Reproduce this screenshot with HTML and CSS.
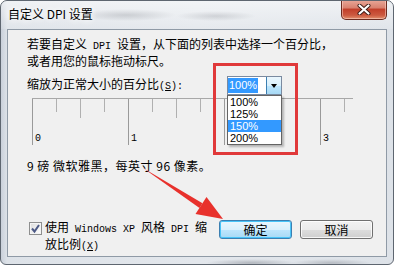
FILE: index.html
```html
<!DOCTYPE html>
<html lang="zh-CN">
<head>
<meta charset="utf-8">
<title>自定义 DPI 设置</title>
<link rel="stylesheet" href="styles.css">
</head>
<body>
<div class="window">
  <div class="titlebar">
    <div class="title">自定义 DPI 设置</div>
    <div class="close">
      <svg width="14" height="11" viewBox="0 0 14 11"><path d="M2.5 1.5 L11.5 9.5 M11.5 1.5 L2.5 9.5" stroke="#3a1a14" stroke-width="4" stroke-linecap="round"/><path d="M2.5 1.5 L11.5 9.5 M11.5 1.5 L2.5 9.5" stroke="#fff" stroke-width="2.2" stroke-linecap="round"/></svg>
    </div>
  </div>
  <div class="client">
    <p class="intro">若要自定义<span class="m"> DPI </span>设置，从下面的列表中选择一个百分比，<br>或者用您的鼠标拖动标尺。</p>
    <div class="scale-row">
      <div class="scale-label">缩放为正常大小的百分比<span class="m">(<u>S</u>):</span></div>
      <div class="combo">
        <div class="combo-field"><span class="combo-sel">100%</span></div>
        <div class="combo-btn"><span class="tri"></span></div>
        <ul class="combo-list">
          <li>100%</li>
          <li>125%</li>
          <li class="on">150%</li>
          <li>200%</li>
        </ul>
      </div>
    </div>
    <div class="ruler">
      <span class="m">0</span><span class="m">1</span><span class="m">2</span><span class="m">3</span>
    </div>
    <p class="note">9 磅 微软雅黑，每英寸 96 像素。</p>
    <div class="bottom">
      <span class="check">
        <svg width="11" height="11" viewBox="0 0 11 11"><path d="M2 5.5 L4.5 8.5 L9 2" fill="none" stroke="#4d5a86" stroke-width="2"/></svg>
      </span>
      <div class="check-label">使用<span class="m"> Windows XP </span>风格<span class="m"> DPI </span>缩<br>放比例<span class="m">(<u>X</u>)</span></div>
      <button class="btn btn-default">确定</button>
      <button class="btn">取消</button>
    </div>
  </div>
</div>
<div class="highlight-box"></div>
<svg class="arrow" width="394" height="265" viewBox="0 0 394 265">
  <polygon points="143,168 202.5,203.3 199.5,208" fill="#e8312c"/>
  <polygon points="223,219 195.5,214 206.5,197" fill="#e8312c"/>
</svg>
</body>
</html>
```
FILE: styles.css
```css
html, body {
  margin: 0;
  padding: 0;
}
body {
  width: 394px;
  height: 265px;
  position: relative;
  overflow: hidden;
  background: #fff;
  font-family: "Noto Sans CJK SC", "Noto Sans", sans-serif;
  font-size: 12px;
  color: #000;
}
.m {
  font-family: "Liberation Mono", "DejaVu Sans Mono", monospace;
  font-size: 10px;
  white-space: pre;
}
.window {
  box-sizing: border-box;
  width: 394px;
  height: 265px;
  border: 1px solid #5e6670;
  border-radius: 7px 7px 6px 6px;
  display: flex;
  flex-direction: column;
  overflow: hidden;
  background:
    radial-gradient(ellipse 50px 6px at 125px 14px, rgba(90,95,105,0.35), transparent),
    radial-gradient(ellipse 40px 5px at 215px 15px, rgba(90,95,105,0.3), transparent),
    radial-gradient(ellipse 45px 4px at 250px 262px, rgba(90,95,105,0.35), transparent),
    radial-gradient(ellipse 40px 4px at 330px 262px, rgba(90,95,105,0.3), transparent),
    linear-gradient(to right, #c9d0da 0, #dde2e8 6px, #e3e7ec 50%, #dde2e8 100%);
}
.titlebar {
  height: 28px;
  flex: none;
  display: flex;
  align-items: flex-start;
  background: linear-gradient(to bottom, rgba(255,255,255,0.55), rgba(255,255,255,0.1));
}
.title {
  padding: 4px 0 0 7px;
  line-height: 17px;
  text-shadow: 0 0 6px #fff, 0 0 8px #fff;
}
.close {
  margin: -1px 6px 0 auto;
  width: 46px;
  height: 20px;
  box-sizing: border-box;
  border: 1px solid #6b2b20;
  border-top: none;
  border-radius: 0 0 5px 5px;
  background: linear-gradient(to bottom, #e9a899 0, #d98270 40%, #c2402b 50%, #cc5a40 80%, #e2906e 100%);
  box-shadow: inset 0 0 0 1px rgba(255,220,210,0.5);
  display: flex;
  align-items: center;
  justify-content: center;
}
.client {
  margin: 0 6px;
  height: 228px;
  flex: none;
  box-sizing: border-box;
  border: 1px solid #8f9aa6;
  background: #f0f0f0;
  padding: 0 0 2px 19px;
  display: flex;
  flex-direction: column;
}
.intro {
  margin: 7px 0 0;
  line-height: 14px;
}
.scale-row {
  margin-top: 8px;
  height: 19px;
  display: flex;
  align-items: center;
}
.scale-label {
  width: 200px;
  line-height: 14px;
}
.combo {
  position: relative;
  width: 55px;
  height: 19px;
  box-sizing: border-box;
  border: 1px solid #7a8aa0;
  background: #fff;
  display: flex;
}
.combo-field {
  flex: 1;
  padding: 1px 0 0 0;
  font-family: "Liberation Sans", Arial, sans-serif;
  font-size: 11px;
  line-height: 15px;
}
.combo-sel {
  display: inline-block;
  background: #3399ff;
  color: #fff;
  padding: 0 1px;
}
.combo-btn {
  width: 15px;
  box-sizing: border-box;
  border-left: 1px solid #3c7fb1;
  background: linear-gradient(to bottom, #eaf6fd 0, #d9f0fc 50%, #bee6fd 51%, #a7d9f5 100%);
  display: flex;
  align-items: center;
  justify-content: center;
}
.tri {
  width: 0;
  height: 0;
  border-left: 3.5px solid transparent;
  border-right: 3.5px solid transparent;
  border-top: 4px solid #000;
}
.combo-list {
  position: absolute;
  left: -1px;
  top: 18px;
  width: 55px;
  box-sizing: border-box;
  margin: 0;
  padding: 0;
  list-style: none;
  border: 1px solid #646464;
  background: #fff;
  box-shadow: 2px 2px 2px rgba(0,0,0,0.25);
  z-index: 2;
  font-family: "Liberation Sans", Arial, sans-serif;
  font-size: 11px;
}
.combo-list li {
  height: 12px;
  line-height: 12px;
  padding-left: 2px;
}
.combo-list li.on {
  background: #3399ff;
  color: #fff;
}
.ruler {
  margin: 3px 0 0 5px;
  width: 321px;
  height: 46px;
  flex: none;
  border-top: 1px solid #a8a8a8;
  display: flex;
  align-items: flex-end;
  background:
    linear-gradient(to right, #9a9a9a 1px, transparent 1px) 0 0 / 96px 46px repeat-x,
    linear-gradient(to right, #b0b0b0 1px, transparent 1px) 0 0 / 48px 19px repeat-x,
    linear-gradient(to right, #b0b0b0 1px, transparent 1px) 0 0 / 24px 13px repeat-x;
}
.ruler span {
  width: 96px;
  flex: none;
  box-sizing: border-box;
  padding-left: 3px;
  line-height: 12px;
}
.note {
  margin: 14px 0 0;
  line-height: 14px;
  letter-spacing: 0.5px;
}
.bottom {
  margin-top: auto;
  display: flex;
  align-items: flex-start;
}
.check {
  width: 13px;
  height: 13px;
  margin: 2px 3px 0 2px;
  box-sizing: border-box;
  border: 1px solid #8e8f8f;
  background: linear-gradient(135deg, #dcdcdc, #ffffff);
  box-shadow: inset 0 0 0 1px #f4f4f4;
  display: flex;
  align-items: center;
  justify-content: center;
  flex: none;
}
.check-label {
  width: 168px;
  line-height: 14px;
  flex: none;
}
.btn {
  width: 73px;
  height: 19px;
  margin: 0 0 0 8px;
  padding: 0;
  box-sizing: border-box;
  border: 1px solid #707070;
  border-radius: 3px;
  font-family: "Noto Sans CJK SC", sans-serif;
  font-size: 12px;
  line-height: 16px;
  color: #000;
  background: linear-gradient(to bottom, #f2f2f2 0, #ebebeb 50%, #dddddd 51%, #cfcfcf 100%);
  box-shadow: inset 0 0 0 1px rgba(255,255,255,0.8);
}
.btn-default {
  margin-left: 6px;
  border-color: #3c7fb1;
  background: linear-gradient(to bottom, #eaf6fd 0, #d9f0fc 50%, #bee6fd 51%, #a7d9f5 100%);
  box-shadow: inset 0 0 0 1px #48c4f8;
}
.highlight-box {
  position: absolute;
  left: 213px;
  top: 63px;
  width: 85px;
  height: 92px;
  box-sizing: border-box;
  border: 3px solid #e0393a;
  z-index: 5;
}
.arrow {
  position: absolute;
  left: 0;
  top: 0;
  z-index: 6;
}
```
